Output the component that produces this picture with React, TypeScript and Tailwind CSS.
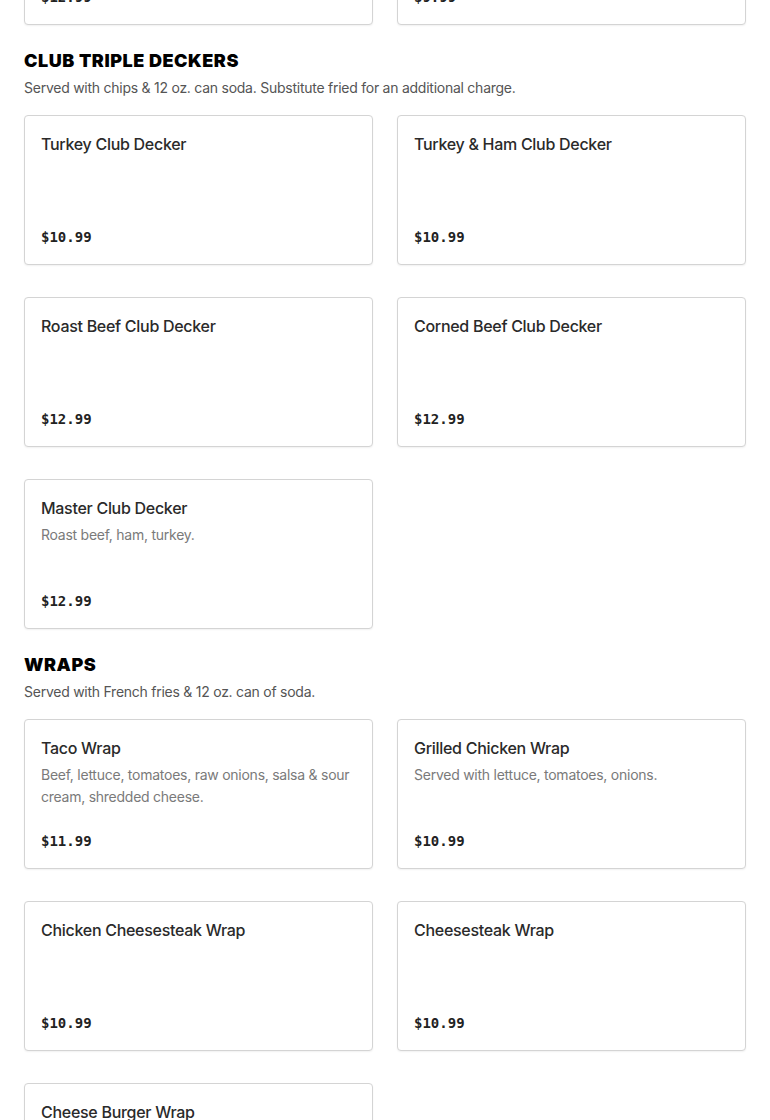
import React from "react";

type Item = { name: string; desc?: string; price: string };

const sections: { title: string; sub: string; items: Item[] }[] = [
  {
    title: "CLUB TRIPLE DECKERS",
    sub: "Served with chips & 12 oz. can soda. Substitute fried for an additional charge.",
    items: [
      { name: "Turkey Club Decker", price: "$10.99" },
      { name: "Turkey & Ham Club Decker", price: "$10.99" },
      { name: "Roast Beef Club Decker", price: "$12.99" },
      { name: "Corned Beef Club Decker", price: "$12.99" },
      { name: "Master Club Decker", desc: "Roast beef, ham, turkey.", price: "$12.99" },
    ],
  },
  {
    title: "WRAPS",
    sub: "Served with French fries & 12 oz. can of soda.",
    items: [
      {
        name: "Taco Wrap",
        desc: "Beef, lettuce, tomatoes, raw onions, salsa & sour cream, shredded cheese.",
        price: "$11.99",
      },
      { name: "Grilled Chicken Wrap", desc: "Served with lettuce, tomatoes, onions.", price: "$10.99" },
      { name: "Chicken Cheesesteak Wrap", price: "$10.99" },
      { name: "Cheesesteak Wrap", price: "$10.99" },
      { name: "Cheese Burger Wrap", price: "$10.99" },
    ],
  },
];

function Card({ item }: { item: Item }) {
  return (
    <div className="flex h-[150px] flex-col rounded-[4px] border border-[#d4d4d4] bg-white px-4 py-4 shadow-[0_1px_2px_rgba(0,0,0,0.06)]">
      <div className="text-[16px] font-medium leading-6 tracking-[-0.018em] text-[#2a2a2a]">{item.name}</div>
      {item.desc && (
        <div className="mt-1 text-[14px] leading-[22px] tracking-[-0.018em] text-[#7a7a7a]">{item.desc}</div>
      )}
      <div
        className="mt-auto text-[14px] font-bold leading-[22px] text-[#222]"
        style={{ fontFamily: '"DejaVu Sans Mono", "Liberation Mono", monospace' }}
      >
        {item.price}
      </div>
    </div>
  );
}

export default function App() {
  return (
    <div
      className="min-h-screen overflow-hidden bg-white px-6"
      style={{ fontFamily: 'Inter, "Noto Sans", Arial, sans-serif' }}
    >
      <div className="-mt-[125px] grid grid-cols-2 gap-x-6">
        <Card item={{ name: "Previous Item", price: "$12.99" }} />
        <Card item={{ name: "Previous Item", price: "$9.99" }} />
      </div>
      {sections.map((s) => (
        <section key={s.title} className="mt-6">
          <h2 className="text-[18px] font-black leading-6 tracking-[0.03em] text-black">{s.title}</h2>
          <p className="mt-[4px] text-[14px] leading-[22px] tracking-[-0.018em] text-[#555]">{s.sub}</p>
          <div className="mt-4 grid grid-cols-2 gap-x-6 gap-y-8">
            {s.items.map((it) => (
              <Card key={it.name} item={it} />
            ))}
          </div>
        </section>
      ))}
    </div>
  );
}
